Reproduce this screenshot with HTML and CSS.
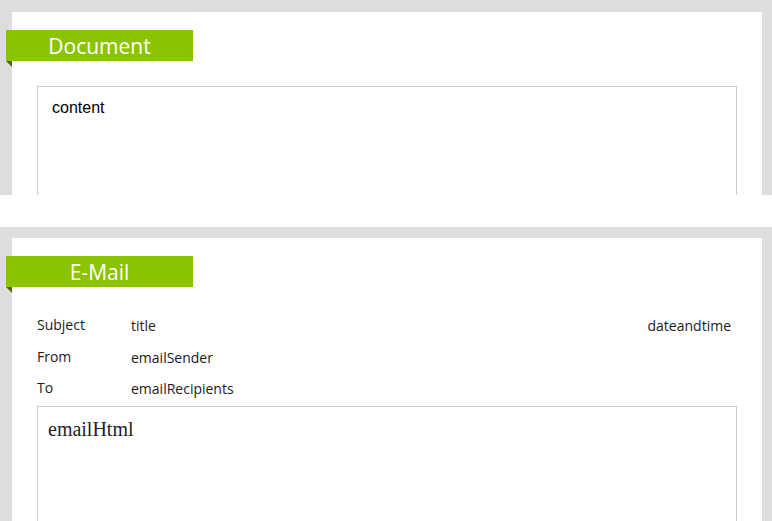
FILE: index.html
```html
<!DOCTYPE html>
<html>
<head>
<meta charset="utf-8">
<link rel="stylesheet" href="styles.css">
</head>
<body>
<section class="panel panel-doc">
  <div class="card">
    <div class="banner">Document</div>
    <div class="box box-doc">content</div>
  </div>
</section>
<section class="panel panel-mail">
  <div class="card">
    <div class="banner">E-Mail</div>
    <div class="meta">
      <div class="row"><span class="label">Subject</span><span class="value">title</span><span class="date">dateandtime</span></div>
      <div class="row"><span class="label">From</span><span class="value">emailSender</span></div>
      <div class="row"><span class="label">To</span><span class="value">emailRecipients</span></div>
    </div>
    <div class="box box-mail">emailHtml</div>
  </div>
</section>
</body>
</html>
```
FILE: styles.css
```css
html, body {
  margin: 0;
  padding: 0;
  background: #ffffff;
  overflow: hidden;
}
.panel {
  background: #dddddd;
  padding: 12px 10px 0 12px;
  box-sizing: border-box;
  overflow: hidden;
}
.panel-doc {
  height: 195px;
}
.panel-mail {
  margin-top: 32px;
  padding-top: 11px;
  height: 294px;
}
.card {
  background: #ffffff;
  height: 100%;
  padding-top: 18px;
  box-sizing: border-box;
}
.banner {
  position: relative;
  margin-left: -6px;
  width: 187px;
  height: 31px;
  box-sizing: border-box;
  padding-top: 2px;
  background: #8cc300;
  color: #ffffff;
  font-family: "Open Sans", sans-serif;
  font-size: 21px;
  line-height: 29px;
  text-align: center;
}
.banner::after {
  content: "";
  position: absolute;
  left: 0;
  top: 31px;
  width: 0;
  height: 0;
  border-top: 6px solid #4f6a00;
  border-left: 6px solid transparent;
}
.box {
  margin: 0 25px 0 25px;
  border: 1px solid #cccccc;
  height: 300px;
  box-sizing: border-box;
  color: #000000;
}
.box-doc {
  margin-top: 25px;
  padding: 12px 14px;
  font-family: "Liberation Sans", Arial, sans-serif;
  font-size: 16px;
}
.meta {
  margin: 22px 25px 0 25px;
  font-family: "Open Sans", sans-serif;
  font-size: 14px;
  color: #1a1a1a;
}
.row {
  display: flex;
  height: 31.5px;
  line-height: 31.5px;
}
.label {
  width: 94px;
}
.value {
  flex: 1;
  padding-top: 1px;
}
.date {
  padding-top: 1px;
  padding-right: 6px;
}
.box-mail {
  margin-top: 2.5px;
  padding: 11px 10px;
  font-family: "Liberation Serif", "Times New Roman", serif;
  font-size: 20px;
  color: #222222;
}
```
